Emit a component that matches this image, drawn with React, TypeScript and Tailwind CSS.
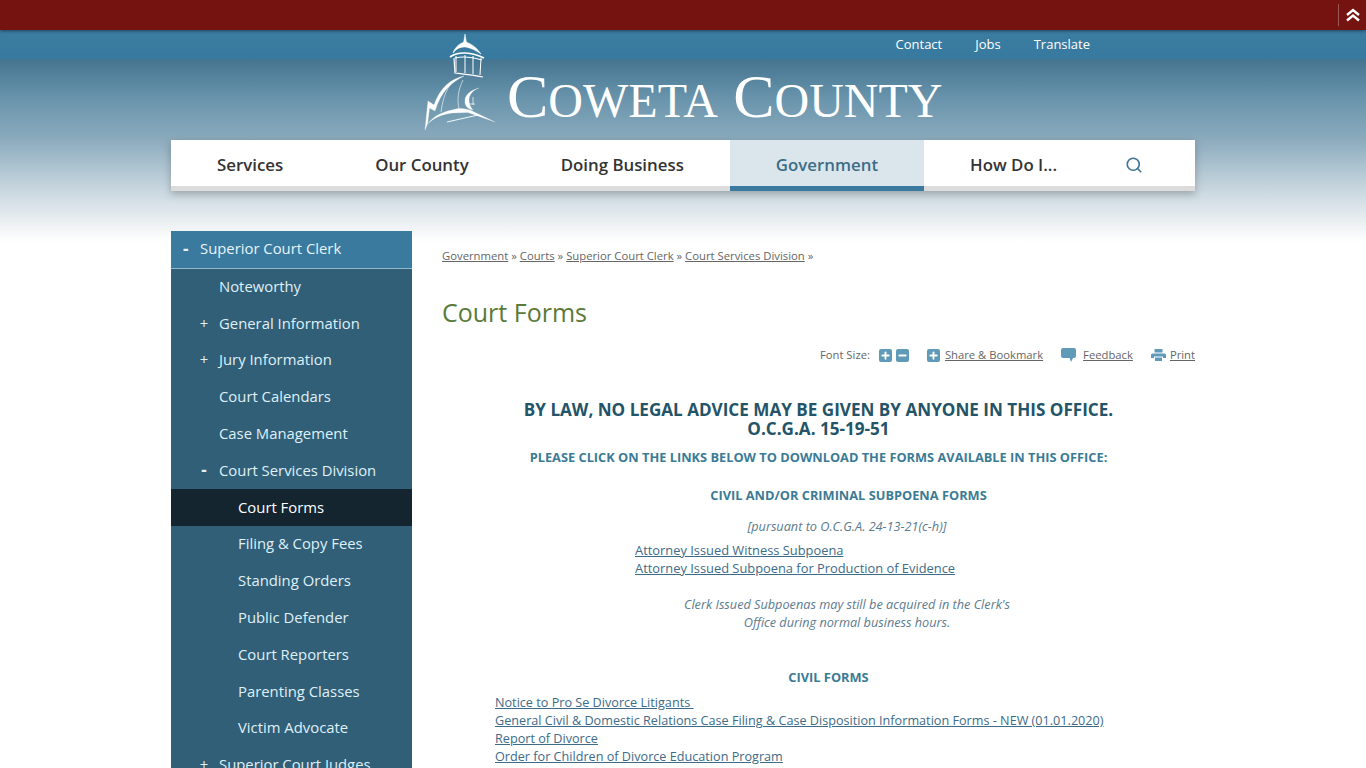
import { Search, Plus, Minus } from "lucide-react";

const side = [
  ["", "Noteworthy", 1],
  ["+", "General Information", 1],
  ["+", "Jury Information", 1],
  ["", "Court Calendars", 1],
  ["", "Case Management", 1],
  ["-", "Court Services Division", 1],
  ["", "Court Forms", 2],
  ["", "Filing & Copy Fees", 2],
  ["", "Standing Orders", 2],
  ["", "Public Defender", 2],
  ["", "Court Reporters", 2],
  ["", "Parenting Classes", 2],
  ["", "Victim Advocate", 2],
  ["+", "Superior Court Judges", 1],
] as const;

function Logo() {
  return (
    <svg width="85" height="105" viewBox="0 0 85 105" fill="none" stroke="#fff" className="shrink-0">
      <path d="M45 4 L46.5 13 L43.5 13 Z" fill="#fff" strokeWidth="0.5" />
      <path d="M33 23 C35 17 40 13 45 12 C51 13 57 18 61 24 C54 19 48 17 44 17 C40 17 36 19 33 23 Z" fill="#fff" strokeWidth="0.5" />
      <path d="M30 27 C38 21 52 22 64 28" strokeWidth="1.6" />
      <path d="M36 26 L36 42 M45 25 L45 43 M53 26 L53 44 M61 28 L60 45" strokeWidth="1" />
      <path d="M34 28 L35 43 C43 44 52 45 63 47 M35 28 C43 26 52 27 62 30" strokeWidth="1.2" />
      <path d="M44 46 C30 49 20 58 14 75 L8 71 L5 100 L7.5 94 L9.5 78 L15 81 C21 62 30 53 44 46 Z" fill="#fff" strokeWidth="0.3" />
      <path d="M7.5 94 C14 86 22 82 32 80 L36 79 C40 78 46 79 50 80 L75 92 L48 82.5 L32 83 C20 85 14 88 7.5 94 Z" fill="#fff" strokeWidth="0.2" />
      <path d="M27 92 L58 85" strokeWidth="0.9" />
      <path d="M43 50 C38 60 37 70 39 79 M32 52 C26 60 23 68 21 82" strokeWidth="0.6" />
      <path d="M59 58 C50 60 44 66 45 72 C45 76 48 79 53 80 C50 77 49 73 49 70 C49 65 53 60 59 58 Z" fill="#fff" strokeWidth="0.2" />
      <path d="M53 67 L53 75 M47 74 L55 74" strokeWidth="0.7" />
    </svg>
  );
}

export default function App() {
  return (
    <div className="h-screen overflow-hidden bg-white font-['Open_Sans',sans-serif] text-[13px] text-[#444]">
      <div className="h-[30px] bg-[#74130f] flex justify-end relative z-10 shadow-[0_1px_3px_rgba(0,0,0,0.45)]">
        <div className="w-[28px] mt-[4px] h-[22px] border-l border-[#9c5a57] flex items-center justify-center">
          <svg width="14" height="14" viewBox="0 0 14 14" fill="none" stroke="#fff" strokeWidth="2.4">
            <path d="M1 7 L7 2 L13 7 M1 12.5 L7 7.5 L13 12.5" />
          </svg>
        </div>
      </div>
      <div className="bg-[linear-gradient(to_bottom,#3b7ca1_0,#387a9f_29px,#44748f_29px,#6a95ad_70px,#8cabbd_110px,#c3d3dc_155px,#eef2f4_195px,#ffffff_212px)] h-[738px]">
        <div className="w-[1024px] mx-auto">
          <div className="flex pl-[249px] h-[110px]">
            <Logo />
            <div className="flex-1">
              <div className="flex justify-end gap-[33px] pr-[105px] pt-[5px] text-[13px] font-medium text-white h-[30px] leading-[18px]">
                <span>Contact</span><span>Jobs</span><span>Translate</span>
              </div>
              <div className="font-['Liberation_Serif',serif] leading-[70px] h-[70px] text-white whitespace-nowrap ml-[2px] mt-[1px]">
                <span className="text-[62px]">C</span><span className="text-[48px] uppercase">oweta</span><span className="text-[48px]"> </span><span className="text-[62px] ml-[6px]">C</span><span className="text-[48px] uppercase">ounty</span>
              </div>
            </div>
          </div>
          <div className="h-[51px] bg-white border-b-[5px] border-[#dcdcdc] flex shadow-[0_3px_8px_rgba(0,0,0,0.25)] text-[16.83px] font-semibold text-[#333] leading-[50px]">
            <span className="px-[46px]">Services</span>
            <span className="px-[46px]">Our County</span>
            <span className="px-[46px]">Doing Business</span>
            <span className="px-[46px] bg-[#dbe6ec] text-[#3c6d88] h-[51px] border-b-[5px] border-[#3a7a9f]">Government</span>
            <span className="px-[46px]">How Do I...</span>
            <span className="ml-[22px] pt-[3px] flex items-center h-[46px]"><Search size={18} strokeWidth={2.2} color="#3f7596" /></span>
          </div>
          <div className="flex mt-[40px]">
            <div className="w-[241px] shrink-0 bg-[#325f78] text-[14.85px] font-medium text-[#dff0f7]">
              <div className="h-[37.6px] pb-[1.6px] bg-[#3a7a9f] border-b border-[#93b9cd] flex items-center text-[#e8f3f8]">
                <span className="w-[29px] pl-[12px] font-bold text-[17px]">-</span>Superior Court Clerk
              </div>
              {side.map(([m, t, lvl]) => (
                <div key={t} className={`h-[36.8px] pb-[2px] flex items-center ${t === "Court Forms" ? "bg-[#14252f] text-white" : ""}`}>
                  <span className={`w-[48px] text-center pl-[18px] shrink-0 ${m === "-" ? "font-bold text-[17px]" : ""}`}>{m}</span>
                  <span className={lvl === 2 ? "pl-[19px]" : ""}>{t}</span>
                </div>
              ))}
            </div>
            <div className="ml-[30px] flex-1">
              <div className="text-[11.3px] text-[#666] mt-[17px] leading-[16px]">
                <span className="underline">Government</span> » <span className="underline">Courts</span> » <span className="underline">Superior Court Clerk</span> » <span className="underline">Court Services Division</span> »
              </div>
              <h1 className="text-[25px] text-[#5a7a3a] mt-[31px] leading-[34px]">Court Forms</h1>
              <div className="flex justify-end items-center text-[11.25px] text-[#666] mt-[17px] h-[18px]">
                <span className="mr-[9px]">Font Size:</span>
                <span className="w-[13px] h-[13px] rounded-[2px] bg-[#5f9ab8] flex items-center justify-center mr-[4px]"><Plus size={11} strokeWidth={4} color="#fff" /></span>
                <span className="w-[13px] h-[13px] rounded-[2px] bg-[#5f9ab8] flex items-center justify-center mr-[18px]"><Minus size={11} strokeWidth={4} color="#fff" /></span>
                <span className="w-[13px] h-[13px] rounded-[2px] bg-[#5f9ab8] flex items-center justify-center mr-[5px]"><Plus size={11} strokeWidth={4} color="#fff" /></span>
                <span className="underline mr-[18px]">Share &amp; Bookmark</span>
                <svg width="15" height="14" viewBox="0 0 15 14" className="mr-[7px]" fill="#5f9ab8">
                  <path d="M2 0 H13 Q15 0 15 2 V8 Q15 10 13 10 H12 L10 14 L8.5 10 H2 Q0 10 0 8 V2 Q0 0 2 0 Z" />
                </svg>
                <span className="underline mr-[18px]">Feedback</span>
                <svg width="15" height="12" viewBox="0 0 15 12" className="mr-[4px]" fill="#5f9ab8">
                  <path d="M3.5 0 H11.5 V3.5 H3.5 Z" />
                  <path d="M1.5 4.5 H13.5 Q15 4.5 15 6 V9 H12 V7.5 H3 V9 H0 V6 Q0 4.5 1.5 4.5 Z" />
                  <path d="M4 8.5 H11 V12 H4 Z" />
                </svg>
                <span className="underline">Print</span>
              </div>
              <div className="text-center text-[17.1px] font-bold text-[#235468] leading-[19px] mt-[36px]">
                BY LAW, NO LEGAL ADVICE MAY BE GIVEN BY ANYONE IN THIS OFFICE.<br />O.C.G.A. 15-19-51
              </div>
              <div className="text-center text-[12.8px] font-bold text-[#3b7b96] leading-[18px] mt-[10px]">PLEASE CLICK ON THE LINKS BELOW TO DOWNLOAD THE FORMS AVAILABLE IN THIS OFFICE:</div>
              <div className="text-center text-[12.8px] font-bold text-[#3b7b96] leading-[18px] mt-[20px] pl-[60px]">CIVIL AND/OR CRIMINAL SUBPOENA FORMS</div>
              <div className="text-center text-[12.7px] italic text-[#5d7b8f] leading-[18px] mt-[13px] pl-[57px]">[pursuant to O.C.G.A. 24-13-21(c-h)]</div>
              <div className="pl-[193px] text-[12.87px] text-[#3d6b88] leading-[18px] mt-[6px] underline">
                <div>Attorney Issued Witness Subpoena</div>
                <div>Attorney Issued Subpoena for Production of Evidence</div>
              </div>
              <div className="text-center text-[12.7px] italic text-[#5d7b8f] leading-[18px] mt-[18px] pl-[57px]">
                Clerk Issued Subpoenas may still be acquired in the Clerk's<br />Office during normal business hours.
              </div>
              <div className="text-center text-[12.8px] font-bold text-[#3b7b96] leading-[18px] mt-[37px] pl-[20px]">CIVIL FORMS</div>
              <div className="pl-[53px] text-[12.65px] text-[#3d6b88] leading-[18px] mt-[7px] underline">
                <div>Notice to Pro Se Divorce Litigants&nbsp;</div>
                <div>General Civil &amp; Domestic Relations Case Filing &amp; Case Disposition Information Forms - NEW (01.01.2020)</div>
                <div>Report of Divorce</div>
                <div>Order for Children of Divorce Education Program</div>
              </div>
            </div>
          </div>
        </div>
      </div>
    </div>
  );
}
